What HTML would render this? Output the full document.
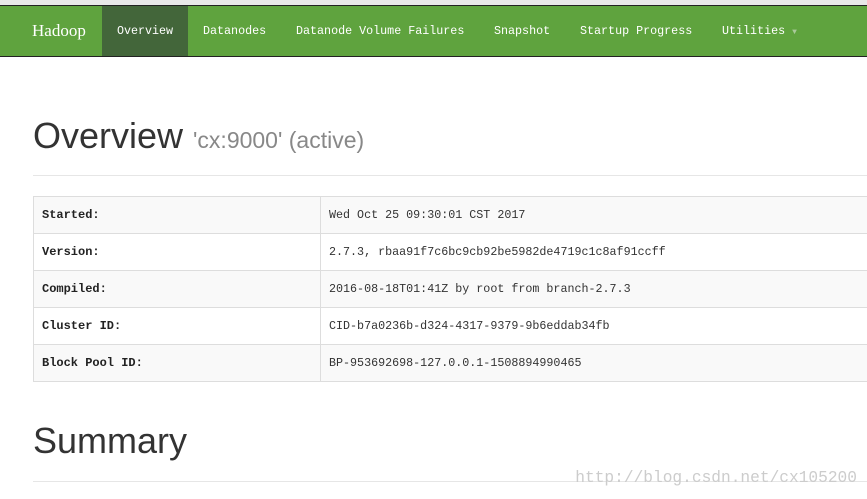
<!DOCTYPE html>
<html><head><style>
body{margin:0;width:867px;height:499px;overflow:hidden;background:#fff;font-family:"Liberation Sans",sans-serif;position:relative}
.top{position:absolute;left:0;top:0;width:867px;height:5px;background:#e8e8e8;border-bottom:1px solid #222}
.nav{position:absolute;left:0;top:6px;width:867px;height:50px;background:#5fa33e;border-bottom:1px solid #222}
.nav span{position:absolute;top:0;line-height:50px;color:#fff;font-family:"Liberation Mono",monospace;font-size:11.7px}
.brand{font-family:"Liberation Serif",serif!important;font-size:17px!important}
.act{background:#43663a;width:86px;text-align:center}
h1{position:absolute;margin:0;font-weight:normal;font-size:36px;color:#333;left:33px}
h1 small{font-size:23px;color:#888}
.hr{position:absolute;left:33px;width:834px;height:1px;background:#e6e6e6}
table{position:absolute;left:33px;top:196px;border-collapse:collapse;width:850px;font-family:"Liberation Mono",monospace;font-size:11.7px;color:#333}
td{border:1px solid #ddd;height:36px;padding:0 8px}
tr:nth-child(odd) td{background:#f9f9f9}
td:first-child{width:270px;font-weight:bold;font-size:12px;color:#222}
.wm{position:absolute;right:10px;top:469px;color:#ccc;font-family:"Liberation Mono",monospace;font-size:16.2px}
</style></head><body>
<div class="top"></div>
<div class="nav">
<span class="brand" style="left:32px">Hadoop</span>
<span class="act" style="left:102px">Overview</span>
<span style="left:203px">Datanodes</span>
<span style="left:296px">Datanode Volume Failures</span>
<span style="left:494px">Snapshot</span>
<span style="left:580px">Startup Progress</span>
<span style="left:722px">Utilities <span style="position:static;font-size:8px;color:#aac99a">▼</span></span>
</div>
<h1 style="top:115px">Overview <small>'cx:9000' (active)</small></h1>
<div class="hr" style="top:175px"></div>
<table>
<tr><td>Started:</td><td>Wed Oct 25 09:30:01 CST 2017</td></tr>
<tr><td>Version:</td><td>2.7.3, rbaa91f7c6bc9cb92be5982de4719c1c8af91ccff</td></tr>
<tr><td>Compiled:</td><td>2016-08-18T01:41Z by root from branch-2.7.3</td></tr>
<tr><td>Cluster ID:</td><td>CID-b7a0236b-d324-4317-9379-9b6eddab34fb</td></tr>
<tr><td>Block Pool ID:</td><td>BP-953692698-127.0.0.1-1508894990465</td></tr>
</table>
<h1 style="top:420px">Summary</h1>
<div class="hr" style="top:481px"></div>
<div class="wm">http://blog.csdn.net/cx105200</div>
</body></html>
